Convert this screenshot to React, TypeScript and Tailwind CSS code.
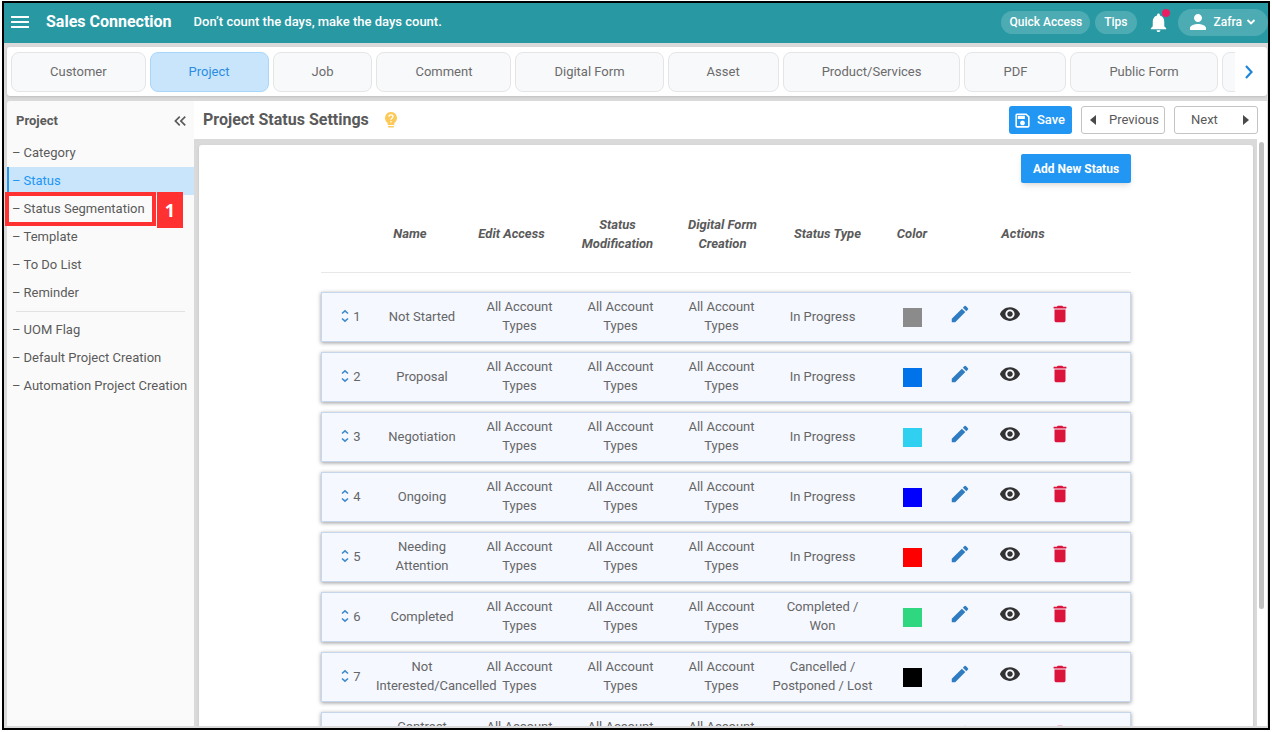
import React from "react";
import {
  MdDelete,
  MdEdit,
  MdKeyboardDoubleArrowLeft,
  MdMenu,
  MdNotifications,
  MdOutlineSave,
  MdPerson,
  MdVisibility,
} from "react-icons/md";

const tabs = [
  "Customer",
  "Project",
  "Job",
  "Comment",
  "Digital Form",
  "Asset",
  "Product/Services",
  "PDF",
  "Public Form",
];

const mainLinks = ["Category", "Status", "Status Segmentation", "Template", "To Do List", "Reminder"];
const extraLinks = ["UOM Flag", "Default Project Creation", "Automation Project Creation"];

const statuses = [
  { name: "Not Started", type: "In Progress", color: "#8b8b8b" },
  { name: "Proposal", type: "In Progress", color: "#0073ea" },
  { name: "Negotiation", type: "In Progress", color: "#2fd0f0" },
  { name: "Ongoing", type: "In Progress", color: "#0000ff" },
  { name: "Needing Attention", type: "In Progress", color: "#ff0000" },
  { name: "Completed", type: "Completed /\nWon", color: "#2fd780" },
  { name: "Not Interested/Cancelled", type: "Cancelled /\nPostponed / Lost", color: "#000000" },
  { name: "Contract Expired", type: "In Progress", color: "#ffa500" },
];

function TipBulb() {
  return (
    <svg viewBox="0 0 12 16" className="h-4 w-3" aria-hidden="true">
      <path d="M6 0a6 6 0 0 0-3.4 10.9V12c0 .6.4 1 1 1h4.8c.6 0 1-.4 1-1v-1.100A6 6 0 0 0 6 0Z" fill="#fdc959" />
      <rect x="3" y="14" width="6" height="1.500" rx=".7" fill="#fdc959" />
      <path d="M4 4.700C4 3.500 4.900 2.800 6 2.800s2 .7 2 1.800c0 1.500-2 1.600-2 3.200" fill="none" stroke="#fff" strokeWidth="1.300" />
      <circle cx="6" cy="9.700" r=".8" fill="#fff" />
    </svg>
  );
}

function Triangle({ right = false }: { right?: boolean }) {
  return (
    <svg viewBox="0 0 6 10" className="h-2.5 w-1.5" aria-hidden="true">
      <path d={right ? "M0 0 6 5 0 10Z" : "M6 0 0 5l6 5Z"} fill="#4a4a4a" />
    </svg>
  );
}

function ChevronDown() {
  return (
    <svg viewBox="0 0 10 8" className="h-2 w-2.5" aria-hidden="true">
      <path d="m1.500 2 3.500 3.500L8.500 2" fill="none" stroke="currentColor" strokeWidth="1.900" />
    </svg>
  );
}

function SortHandle() {
  return (
    <svg viewBox="0 0 8 14" className="h-3.5 w-2" aria-hidden="true">
      <path d="M1 4.500 4 1.800l3 2.700M1 9.500l3 2.700 3-2.700" fill="none" stroke="#3f8acb" strokeWidth="1.600" />
    </svg>
  );
}

function TopBar() {
  return (
    <header className="flex h-10 shrink-0 items-center bg-[#2899a3] pb-0.5 pl-1.5 text-white">
      <button aria-label="Menu" className="flex w-5 justify-center">
        <MdMenu className="h-6 w-6 shrink-0" />
      </button>
      <h1 className="ml-4 text-base font-bold">Sales Connection</h1>
      <p className="ml-[22px] text-[13px] font-medium">Don’t count the days, make the days count.</p>
      <div className="ml-auto flex items-center text-xs font-medium">
        <button className="h-[23px] rounded-full bg-[#4dabb3] px-2">Quick Access</button>
        <button className="ml-[5px] h-[23px] rounded-full bg-[#4dabb3] px-[9px]">Tips</button>
        <button aria-label="Notifications" className="relative ml-2.5">
          <MdNotifications className="h-[23px] w-[23px]" />
          <span className="absolute right-0 -top-0.5 h-2 w-2 rounded-full bg-[#e91e63]" />
        </button>
        <button className="ml-2 flex h-[27px] items-center rounded-full bg-[#4dabb3] pr-3 pl-2">
          <MdPerson className="h-6 w-6" />
          <span className="mr-1 ml-1">Zafra</span>
          <ChevronDown />
        </button>
      </div>
    </header>
  );
}

function TabBar() {
  return (
    <nav className="mt-1 mr-px ml-[3px] flex h-[49px] shrink-0 items-center rounded-[3px] bg-white pl-1 shadow-sm">
      <div className="flex min-w-0 flex-1 gap-1 overflow-hidden">
        {tabs.map((tab) => (
          <a
            key={tab}
            href="#"
            className={`flex h-10 shrink-0 items-center justify-center rounded-lg border px-[38px] text-[13px] ${
              tab === "Project"
                ? "border-[#a9d6fb] bg-[#c9e5fc] text-[#2a8de0]"
                : "border-[#e4e5e7] bg-[#f8f9fb] text-[#6b6b6b]"
            }`}
          >
            {tab}
          </a>
        ))}
        <a
          href="#"
          aria-label="More settings"
          className="h-10 w-24 shrink-0 rounded-lg border border-[#e4e5e7] bg-[#f8f9fb]"
        />
      </div>
      <button aria-label="Next tabs" className="flex w-8 justify-center pr-1">
        <svg viewBox="0 0 8 14" className="h-3.5 w-2" aria-hidden="true">
          <path d="m1 1 5.500 6L1 13" fill="none" stroke="#1f86dc" strokeWidth="2.200" />
        </svg>
      </button>
    </nav>
  );
}

function SideLink({ label }: { label: string }) {
  const active = label === "Status";
  return (
    <li className="relative">
      <a
        href="#"
        className={`flex h-7 items-center gap-[3px] border-l-2 pl-[3px] text-[13px] whitespace-nowrap ${
          active ? "border-[#2196f3] bg-[#c9e5fc] text-[#2196f3]" : "border-transparent"
        }`}
      >
        <span>–</span>
        {label}
      </a>
      {label === "Status Segmentation" && (
        <>
          <span className="absolute -top-[3px] -left-0.5 h-[34px] w-[151px] border-4 border-[#ff3131]" />
          <span className="absolute -top-[3px] left-[150px] flex h-9 w-[26px] items-center justify-center bg-[#ff3131] font-['Noto_Sans',sans-serif] text-lg font-bold text-white">
            1
          </span>
        </>
      )}
    </li>
  );
}

function Sidebar() {
  return (
    <aside className="z-10 w-[187px] shrink-0 rounded-tl-[3px] bg-[#fafafa]">
      <div className="flex h-[38px] items-center justify-between pt-0.5 pr-1 pl-[9px]">
        <h2 className="text-[13px] font-bold">Project</h2>
        <button aria-label="Collapse sidebar">
          <MdKeyboardDoubleArrowLeft className="h-5 w-5" />
        </button>
      </div>
      <ul>
        {mainLinks.map((label) => (
          <SideLink key={label} label={label} />
        ))}
      </ul>
      <hr className="mx-[9px] my-1 border-[#e2e2e2]" />
      <ul>
        {extraLinks.map((label) => (
          <SideLink key={label} label={label} />
        ))}
      </ul>
    </aside>
  );
}

function StatusTable() {
  const head = "flex h-[78px] items-center justify-center border-b border-[#e8e8e8] leading-[19px]";
  return (
    <table className="mt-0.5 w-full table-fixed border-separate border-spacing-x-0 border-spacing-y-2.5 text-center text-[13px] leading-[19px]">
      <colgroup>
        <col className="w-[50px]" />
        <col className="w-[98px]" />
        <col className="w-[101px]" />
        <col className="w-[101px]" />
        <col className="w-[101px]" />
        <col className="w-[101px]" />
        <col className="w-[62px]" />
        <col className="w-[50px]" />
        <col className="w-[50px]" />
        <col className="w-[50px]" />
        <col />
      </colgroup>
      <thead className="italic">
        <tr>
          <th className="p-0 pb-[9px]"><div className={head} /></th>
          <th className="p-0 pb-[9px]"><div className={`${head} pr-5`}>Name</div></th>
          <th className="p-0 pb-[9px]"><div className={`${head} pr-4`}>Edit Access</div></th>
          <th className="p-0 pb-[9px]"><div className={`${head} pr-1.5`}>Status<br />Modification</div></th>
          <th className="p-0 pb-[9px]"><div className={`${head} pl-0.5`}>Digital Form<br />Creation</div></th>
          <th className="p-0 pb-[9px]"><div className={`${head} pl-2.5`}>Status Type</div></th>
          <th className="p-0 pb-[9px]"><div className={`${head} pl-4`}>Color</div></th>
          <th className="p-0 pb-[9px]" colSpan={4}><div className={`${head} pr-5`}>Actions</div></th>
        </tr>
      </thead>
      <tbody>
        {statuses.map((status, index) => (
          <tr
            key={status.name}
            className="h-[50px] bg-[#f5f8ff] text-[#666] shadow-[inset_0_0_0_1px_#c6d6ec,0_1px_4px_rgba(0,0,0,0.4)]"
          >
            <td className="p-0 pb-0.5">
              <span className="flex items-center justify-center gap-1 pl-2.5">
                <SortHandle />
                {index + 1}
              </span>
            </td>
            <td className="pt-0 pr-px pb-0.5 pl-[5px]">{status.name}</td>
            <td className="px-4 pt-0 pb-0.5">All Account Types</td>
            <td className="px-4 pt-0 pb-0.5">All Account Types</td>
            <td className="px-4 pt-0 pb-0.5">All Account Types</td>
            <td className="p-0 pb-0.5 whitespace-pre-line">{status.type}</td>
            <td className="py-0 pr-0 pl-4">
              <span className="mx-auto block h-[19px] w-[19px]" style={{ backgroundColor: status.color }} />
            </td>
            <td className="p-0 pb-1.5">
              <button aria-label={`Edit ${status.name}`} className="block w-full">
                <MdEdit className="mx-auto h-[22px] w-[22px] text-[#2f7dc0]" />
              </button>
            </td>
            <td className="p-0 pb-1.5">
              <button aria-label={`View ${status.name}`} className="block w-full">
                <MdVisibility className="mx-auto h-[22px] w-[22px] text-[#333]" />
              </button>
            </td>
            <td className="p-0 pb-1.5">
              <button aria-label={`Delete ${status.name}`} className="block w-full">
                <MdDelete className="mx-auto h-[22px] w-[22px] text-[#dc143c]" />
              </button>
            </td>
            <td className="p-0" />
          </tr>
        ))}
      </tbody>
    </table>
  );
}

export default function App() {
  return (
    <div className="h-screen bg-white px-0.5 pt-px pb-0.5 font-['Roboto',sans-serif] text-[#5a5a5a]">
      <div className="flex h-full flex-col overflow-hidden border-2 border-black bg-[#dadada]">
        <TopBar />
        <TabBar />
        <div className="mt-[5px] mr-px mb-0.5 ml-[3px] flex min-h-0 flex-1">
          <Sidebar />
          <main className="flex min-w-0 flex-1 flex-col">
            <div className="flex h-[38px] shrink-0 items-center bg-white px-[9px]">
              <h2 className="text-base font-bold">Project Status Settings</h2>
              <button aria-label="Help" className="ml-4">
                <TipBulb />
              </button>
              <div className="ml-auto flex gap-[9px] text-[13px]">
                <button className="flex h-7 items-center gap-[5px] rounded-[3px] bg-[#2196f3] px-1 pr-[7px] font-medium text-white">
                  <MdOutlineSave className="h-[19px] w-[19px]" />
                  Save
                </button>
                <button className="flex h-7 w-[84px] items-center justify-between rounded-[3px] border border-[#c4c4c4] px-[5px] pl-2">
                  <Triangle />
                  Previous
                </button>
                <button className="flex h-7 w-[84px] items-center justify-between rounded-[3px] border border-[#c4c4c4] pr-2 pl-4">
                  Next
                  <Triangle right />
                </button>
              </div>
            </div>
            <div className="flex min-h-0 flex-1">
              <div className="min-w-0 flex-1 overflow-hidden pt-1.5 pr-1 pl-[5px]">
                <section className="rounded-[3px] bg-white pt-[9px] shadow">
                  <div className="mx-auto w-full max-w-[810px]">
                    <div className="flex justify-end">
                      <button className="h-[29px] w-[110px] rounded-xs bg-[#2196f3] text-xs font-bold text-white shadow-md">
                        Add New Status
                      </button>
                    </div>
                    <StatusTable />
                  </div>
                </section>
              </div>
              <div className="w-2.5 shrink-0 bg-white pt-[3px] pl-0.5">
                <div className="h-4/5 w-[5px] rounded-full bg-[#c1c1c1]" />
              </div>
            </div>
          </main>
        </div>
      </div>
    </div>
  );
}
